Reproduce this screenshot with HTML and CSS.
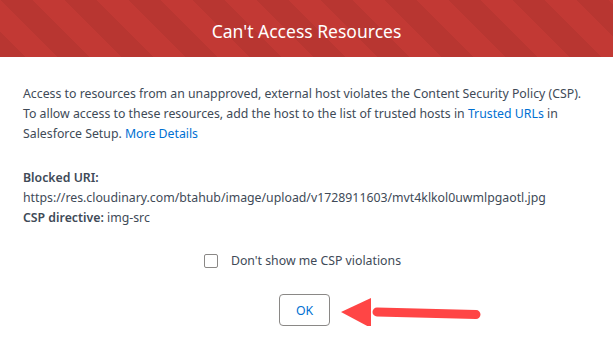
FILE: index.html
```html
<!DOCTYPE html>
<html lang="en">
<head>
  <meta charset="UTF-8">
  <title>Can't Access Resources</title>
  <link rel="stylesheet" href="styles.css">
</head>
<body>
<div class="modal">
  <div class="modal-header">
    <h2 class="modal-title">Can't Access Resources</h2>
  </div>

  <div class="modal-body">
    <p class="message">
      Access to resources from an unapproved, external host violates the Content Security Policy (CSP).<br>
      To allow access to these resources, add the host to the list of trusted hosts in <a href="#" class="link">Trusted URLs</a> in<br>
      Salesforce Setup. <a href="#" class="link">More Details</a>
    </p>

    <div class="details">
      <div class="label">Blocked URI:</div>
      <div>https://res.cloudinary.com/btahub/image/upload/v1728911603/mvt4klkol0uwmlpgaotl.jpg</div>
      <div><span class="label">CSP directive:</span> img-src</div>
    </div>

    <label class="checkbox-row">
      <span class="checkbox"></span>
      <span>Don't show me CSP violations</span>
    </label>

    <div class="footer">
      <button class="btn">OK</button>
      <!-- annotation arrow pointing at the button -->
      <svg class="arrow" width="140" height="34" viewBox="0 0 140 34">
        <path d="M36 14 L135 16.5" stroke="#ff4545" stroke-width="9" stroke-linecap="round" fill="none"/>
        <polygon points="0,14 30,0 30,30" fill="#ff4545"/>
      </svg>
    </div>
  </div>
</div>
</body>
</html>
```

FILE: styles.css
```css
* {
  margin: 0;
  padding: 0;
  box-sizing: border-box;
}

body {
  background: #ffffff;
  font-family: "Noto Sans", "Open Sans", sans-serif;
  color: #404a57;
  font-size: 12.3px;
  line-height: 20px;
}

/* Header with diagonal alert texture */
.modal-header {
  height: 57px;
  display: flex;
  align-items: center;
  justify-content: center;
  background-color: #c23934;
  background-image: linear-gradient(45deg,
          rgba(0, 0, 0, 0.05) 25%, transparent 25%,
          transparent 50%, rgba(0, 0, 0, 0.05) 50%,
          rgba(0, 0, 0, 0.05) 75%, transparent 75%, transparent);
  background-size: 64px 64px;
}

.modal-title {
  color: #ffffff;
  font-weight: 400;
  font-size: 17.5px;
  line-height: 24px;
  padding-top: 4px;
}

.modal-body {
  padding: 27px 23px 0;
}

.link {
  color: #0070d2;
  text-decoration: none;
}

.details {
  margin-top: 24px;
}

.label {
  font-weight: 600;
}

.checkbox-row {
  display: flex;
  align-items: center;
  justify-content: center;
  gap: 13px;
  margin-top: 23px;
  padding-right: 8px;
}

.checkbox {
  width: 14px;
  height: 14px;
  border: 1px solid #8a8886;
  border-radius: 2px;
  background: #fff;
}

.footer {
  position: relative;
  display: flex;
  justify-content: center;
  margin-top: 23px;
  padding-right: 4px;
}

.btn {
  width: 51px;
  height: 32px;
  border: 1px solid #8a8886;
  border-radius: 4px;
  background: #fff;
  color: #0070d2;
  font-family: inherit;
  font-size: 12.3px;
}

.arrow {
  position: absolute;
  left: 318px;
  top: 4px;
}
```
